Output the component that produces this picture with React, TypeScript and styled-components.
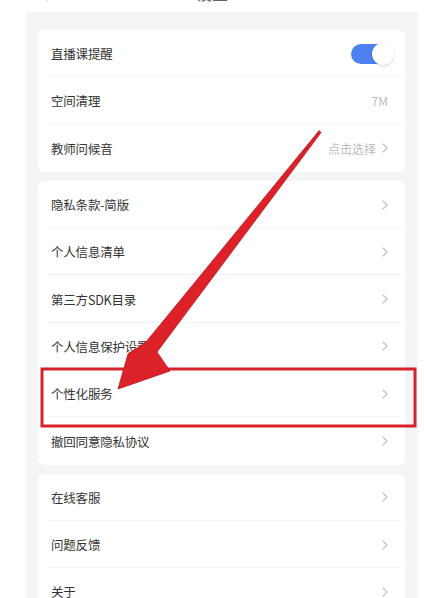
import React from 'react'
import styled, { createGlobalStyle } from 'styled-components'

const GlobalStyle = createGlobalStyle`
  html, body {
    margin: 0;
    padding: 0;
    background: #ffffff;
  }
  body {
    font-family: "Noto Sans CJK SC", "Noto Sans", "Liberation Sans", sans-serif;
    -webkit-font-smoothing: antialiased;
  }
`

const Page = styled.div`
  position: relative;
  width: 424px;
  height: 598px;
  overflow: hidden;
  background: #ffffff;
`

const TopBar = styled.div`
  height: 12px;
  overflow: hidden;
`

const NavRow = styled.div`
  height: 28px;
  margin-top: -21px;
  display: flex;
  align-items: center;
  position: relative;
  padding-left: 40px;
  color: #444;
  font-size: 16px;
`

const NavTitle = styled.div`
  position: absolute;
  left: 0;
  right: 0;
  text-align: center;
  font-size: 16px;
  color: #666;
`

const Panel = styled.div`
  margin-left: 26px;
  width: 392px;
  min-height: 586px;
  box-sizing: border-box;
  background: #f4f5f7;
  padding: 18px 13px 0 12px;
  display: flex;
  flex-direction: column;
  gap: 9px;
`

const Card = styled.div`
  background: #ffffff;
  border-radius: 6px;
  overflow: hidden;
`

const Row = styled.div`
  position: relative;
  height: 47.3px;
  display: flex;
  align-items: center;
  justify-content: space-between;
  padding: 0 17px 0 13px;

  &:not(:last-child)::after {
    content: '';
    position: absolute;
    left: 10px;
    right: 4px;
    bottom: 0;
    height: 1px;
    background: #f1f2f4;
  }
`

const Label = styled.span`
  font-size: 12.5px;
  color: #333333;
  letter-spacing: -0.2px;
`

const Side = styled.div`
  display: flex;
  align-items: center;
  gap: 6px;
`

const Value = styled.span`
  font-size: 12px;
  color: #bcbcbc;
`

const ToggleTrack = styled.div<{ $on: boolean }>`
  position: relative;
  width: 42px;
  height: 20px;
  margin-right: -5px;
  border-radius: 10px;
  background: ${(p) => (p.$on ? '#4e80f2' : '#e4e4e4')};
`

const ToggleKnob = styled.div`
  position: absolute;
  right: -1px;
  top: -1px;
  width: 22px;
  height: 22px;
  border-radius: 50%;
  background: #ffffff;
  box-shadow: 0 1px 3px rgba(0, 0, 0, 0.18);
`

const Overlay = styled.svg`
  position: absolute;
  top: 0;
  left: 0;
  pointer-events: none;
`

const Chevron = () => (
  <svg width="6" height="10" viewBox="0 0 6 10">
    <polyline points="1,1 5,5 1,9" fill="none" stroke="#c2c2c2" strokeWidth="1.2" strokeLinecap="round" strokeLinejoin="round" />
  </svg>
)

type Item = { label: string; value?: string; arrow?: boolean; toggle?: boolean }

const groups: Item[][] = [
  [
    { label: '直播课提醒', toggle: true },
    { label: '空间清理', value: '7M' },
    { label: '教师问候音', value: '点击选择', arrow: true },
  ],
  [
    { label: '隐私条款-简版', arrow: true },
    { label: '个人信息清单', arrow: true },
    { label: '第三方SDK目录', arrow: true },
    { label: '个人信息保护设置', arrow: true },
    { label: '个性化服务', arrow: true },
    { label: '撤回同意隐私协议', arrow: true },
  ],
  [
    { label: '在线客服', arrow: true },
    { label: '问题反馈', arrow: true },
    { label: '关于', arrow: true },
  ],
]

export default function App() {
  return (
    <Page>
      <GlobalStyle />
      <TopBar>
        <NavRow>
          <svg width="10" height="16" viewBox="0 0 10 16">
            <polyline points="8,1 2,8 8,15" fill="none" stroke="#555" strokeWidth="1.6" />
          </svg>
          <NavTitle>设置</NavTitle>
        </NavRow>
      </TopBar>
      <Panel>
        {groups.map((g, gi) => (
          <Card key={gi}>
            {g.map((it) => (
              <Row key={it.label}>
                <Label>{it.label}</Label>
                <Side>
                  {it.value && <Value>{it.value}</Value>}
                  {it.arrow && <Chevron />}
                  {it.toggle && (
                    <ToggleTrack $on>
                      <ToggleKnob />
                    </ToggleTrack>
                  )}
                </Side>
              </Row>
            ))}
          </Card>
        ))}
      </Panel>
      <Overlay width="424" height="598" viewBox="0 0 424 598">
        <rect x="42" y="369" width="373" height="57" fill="none" stroke="#d7232c" strokeWidth="3" />
        <polygon
          points="319.2,130.6 321,132.6 157,352 170,371 118,389 128,354 146,342"
          fill="#dc2129"
          stroke="#b9161e"
          strokeWidth="0.8"
          strokeLinejoin="round"
        />
      </Overlay>
    </Page>
  )
}
